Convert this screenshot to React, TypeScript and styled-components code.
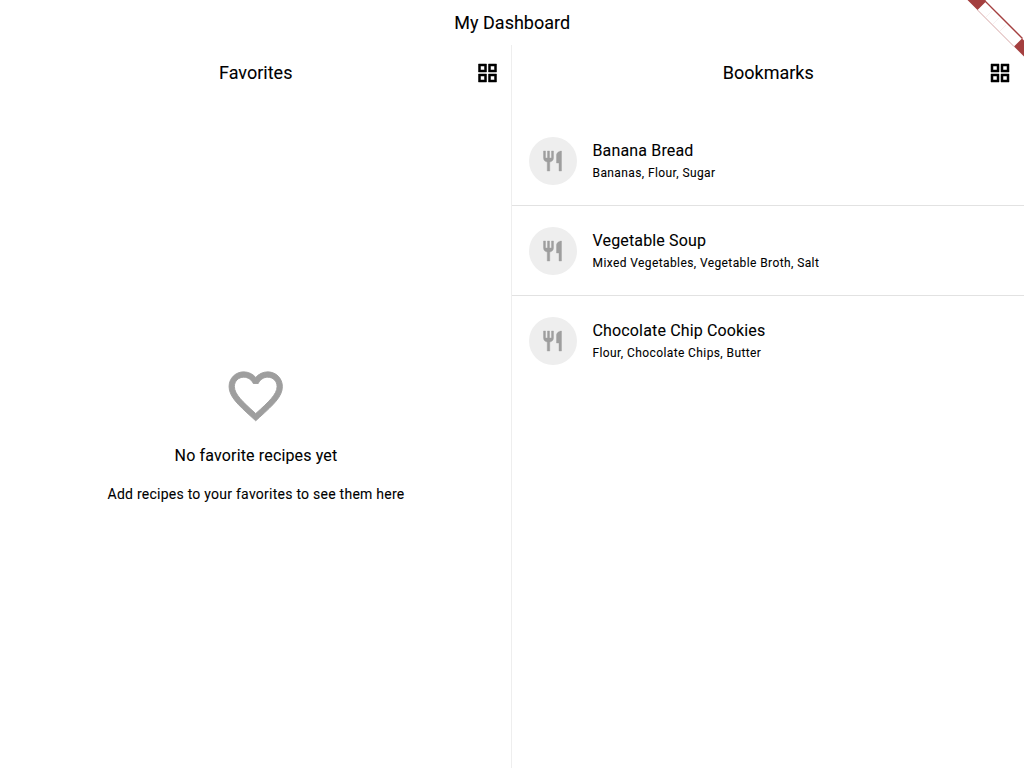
import React from 'react';
import styled, { createGlobalStyle } from 'styled-components';

const GlobalStyle = createGlobalStyle`
  * { box-sizing: border-box; }
  body { margin: 0; background: #fff; color: #000; font-family: Roboto, sans-serif; overflow: hidden; -webkit-text-stroke: 0.08px #000; }
  h1, h2, h3, p, ul { margin: 0; padding: 0; font-weight: 400; }
`;

const Page = styled.div`
  position: relative;
  display: flex;
  flex-direction: column;
  width: 100vw;
  height: 100vh;
`;

const AppBar = styled.header`
  display: flex;
  align-items: center;
  justify-content: center;
  height: 45px;
  padding-left: 0.5px;
`;

const Title = styled.h1`
  font-size: 18px;
  line-height: 24px;
`;

const Columns = styled.main`
  flex: 1;
  display: grid;
  grid-template-columns: 1fr 1fr;
`;

const Pane = styled.section<{ $divided?: boolean }>`
  display: flex;
  flex-direction: column;
  border-right: ${p => (p.$divided ? '1px solid #eeeeee' : 'none')};
`;

const PaneHeader = styled.div`
  display: grid;
  grid-template-columns: 48px 1fr 48px;
  align-items: center;
  justify-items: center;
  height: 56px;
`;

const PaneTitle = styled.h2`
  grid-column: 2;
  padding-left: 0.5px;
  font-size: 18px;
  line-height: 24px;
`;

const Empty = styled.div`
  flex: 1;
  display: flex;
  flex-direction: column;
  align-items: center;
  justify-content: center;
  padding: 0 0 2px 1px;
`;

const EmptyTitle = styled.h3`
  margin-top: 16px;
  font-size: 16px;
  line-height: 24px;
  letter-spacing: 0.15px;
`;

const EmptyText = styled.p`
  margin-top: 16px;
  font-size: 14px;
  line-height: 20px;
  letter-spacing: 0.25px;
`;

const List = styled.ul`
  list-style: none;
  padding-top: 15px;
`;

const Item = styled.li`
  display: flex;
  align-items: center;
  gap: 16px;
  height: 90px;
  padding: 0 16px 1px 16.5px;
  & + & { box-shadow: 0 -1px #e2e2e2; }
`;

const Avatar = styled.span`
  display: flex;
  align-items: center;
  justify-content: center;
  width: 48px;
  height: 48px;
  border-radius: 50%;
  background: #eeeeee;
`;

const ItemText = styled.div`
  padding-bottom: 2px;
`;

const ItemName = styled.h3`
  font-size: 16px;
  line-height: 24px;
  letter-spacing: 0.15px;
`;

const ItemDetail = styled.p`
  margin-top: 2px;
  font-size: 12px;
  line-height: 16px;
  letter-spacing: 0.4px;
`;

const Icon = styled.svg<{ $size?: number; $color?: string; $weight?: number }>`
  display: block;
  width: ${p => p.$size ?? 24}px;
  height: ${p => p.$size ?? 24}px;
  fill: ${p => p.$color ?? '#000'};
  stroke: ${p => p.$color ?? '#000'};
  stroke-width: ${p => p.$weight ?? 0.5};
`;

const Ribbon = styled.svg`
  position: absolute;
  top: 0;
  right: 0;
`;

const GridIcon = ({ shift = 0 }: { shift?: number }) => (
  <Icon viewBox={`${-shift} 0 24 24`}>
    <path d="M3 3v8h8V3H3zm6 6H5V5h4v4zm-6 4v8h8v-8H3zm6 6H5v-4h4v4zm4-16v8h8V3h-8zm6 6h-4V5h4v4zm-6 4v8h8v-8h-8zm6 6h-4v-4h4v4z" />
  </Icon>
);

const HeartIcon = () => (
  <Icon viewBox="0.1 0.05 24 24" $size={64} $color="#9e9e9e" $weight={0.35}>
    <path d="M16.5 3c-1.74 0-3.41.81-4.5 2.09C10.91 3.81 9.24 3 7.5 3 4.42 3 2 5.42 2 8.5c0 3.78 3.4 6.86 8.55 11.54L12 21.35l1.45-1.32C18.6 15.36 22 12.28 22 8.5 22 5.42 19.58 3 16.5 3zm-4.4 15.55l-.1.1-.1-.1C7.14 14.24 4 11.39 4 8.5 4 6.5 5.5 5 7.5 5c1.54 0 3.04.99 3.57 2.36h1.87C13.46 5.99 14.96 5 16.5 5c2 0 3.5 1.5 3.5 3.5 0 2.89-3.14 5.74-7.9 10.05z" />
  </Icon>
);

const CutleryIcon = () => (
  <Icon viewBox="0.5 0 24 24" $color="#9e9e9e" $weight={0.4}>
    <path d="M11 9H9V2H7v7H5V2H3v7c0 2.12 1.66 3.84 3.75 3.97V22h2.5v-9.03C11.34 12.84 13 11.12 13 9V2h-2v7zm5-3v8h2.5v8H21V2c-2.76 0-5 2.24-5 4z" />
  </Icon>
);

const recipes = [
  { name: 'Banana Bread', detail: 'Bananas, Flour, Sugar' },
  { name: 'Vegetable Soup', detail: 'Mixed Vegetables, Vegetable Broth, Salt' },
  { name: 'Chocolate Chip Cookies', detail: 'Flour, Chocolate Chips, Butter' },
];

export default function App() {
  return (
    <Page>
      <GlobalStyle />
      <AppBar>
        <Title>My Dashboard</Title>
      </AppBar>
      <Columns>
        <Pane $divided>
          <PaneHeader>
            <PaneTitle>Favorites</PaneTitle>
            <GridIcon shift={0.5} />
          </PaneHeader>
          <Empty>
            <HeartIcon />
            <EmptyTitle>No favorite recipes yet</EmptyTitle>
            <EmptyText>Add recipes to your favorites to see them here</EmptyText>
          </Empty>
        </Pane>
        <Pane>
          <PaneHeader>
            <PaneTitle>Bookmarks</PaneTitle>
            <GridIcon />
          </PaneHeader>
          <List>
            {recipes.map(r => (
              <Item key={r.name}>
                <Avatar>
                  <CutleryIcon />
                </Avatar>
                <ItemText>
                  <ItemName>{r.name}</ItemName>
                  <ItemDetail>{r.detail}</ItemDetail>
                </ItemText>
              </Item>
            ))}
          </List>
        </Pane>
      </Columns>
      <Ribbon width="60" height="60" viewBox="0 0 60 60">
        <path d="M3.5 0H21.5L22 1.5L13.5 10Z M58 38.5L60 40.5V56.5L50 46.5Z" fill="#a43f3f" />
        <path d="M21 1L58.5 38.5" stroke="#a43f3f" strokeWidth="1.3" />
        <path d="M13.5 10L50 46.5" stroke="#d6a6a6" strokeWidth="1" />
        <path d="M22 17L28 11M29 24L35 18M36 31L42 25" stroke="#f4eaea" strokeWidth="0.7" />
      </Ribbon>
    </Page>
  );
}
